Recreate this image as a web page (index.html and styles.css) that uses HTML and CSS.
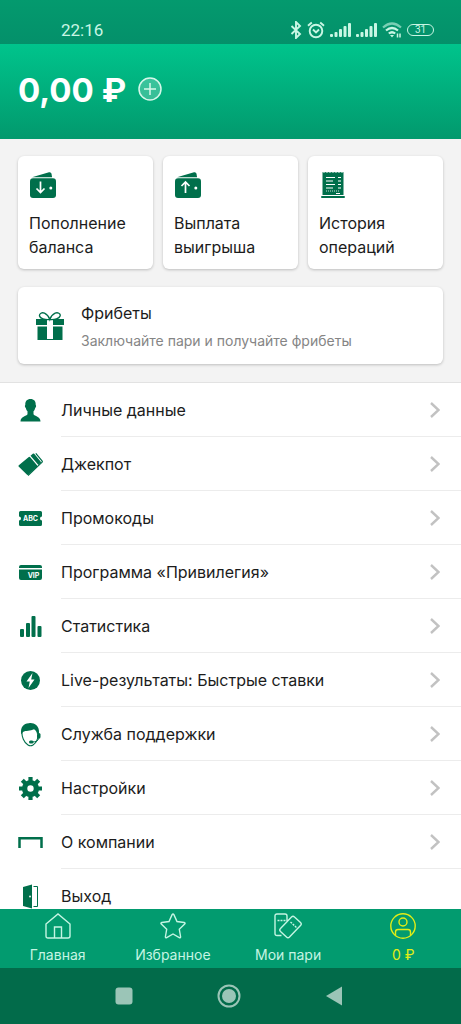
FILE: index.html
```html
<!DOCTYPE html>
<html lang="ru">
<head>
<meta charset="utf-8">
<meta name="viewport" content="width=device-width, initial-scale=1">
<title>Личный кабинет</title>
<link rel="stylesheet" href="styles.css">
</head>
<body>
<div class="app">
  <div class="status">
    <span class="status-time">22:16</span>
    <div class="status-icons">
      <svg width="12" height="18" viewBox="0 0 12 18" fill="none" stroke="currentColor" stroke-width="1.9"><path d="M1.500 5l8.500 8-4 4V1l4 4-8.500 8"/></svg>
      <svg width="18" height="18" viewBox="0 0 18 18" fill="none" stroke="currentColor" stroke-width="1.900"><circle cx="9" cy="10" r="6.300"/><path d="M1 4.800L4.800 1.500M17 4.800L13.200 1.500M6 8.500l3 3 3-3"/></svg>
      <svg width="21" height="14" viewBox="0 0 21 14" fill="currentColor"><rect y="11" width="3" height="3" rx="1"/><rect x="4.500" y="9" width="3" height="5" rx="1"/><rect x="9" y="6" width="3" height="8" rx="1"/><rect x="13.500" y="3" width="3" height="11" rx="1"/><rect x="18" width="3" height="14" rx="1"/></svg>
      <svg width="21" height="14" viewBox="0 0 21 14" fill="currentColor"><rect y="11" width="3" height="3" rx="1"/><rect x="4.500" y="9" width="3" height="5" rx="1"/><rect x="9" y="6" width="3" height="8" rx="1"/><rect x="13.500" y="3" width="3" height="11" rx="1"/><rect x="18" width="3" height="14" rx="1"/></svg>
      <svg width="20" height="16" viewBox="0 0 20 16" fill="none" stroke="currentColor" stroke-width="2.200"><path d="M1 5.500Q10-2.500 19 5.500" opacity=".6"/><path d="M4 8.500q6-5 12 0M6.800 11.500q3.200-2.500 6.400 0"/><path d="M8 13h4l-2 2.500z" fill="currentColor" stroke="none"/><path d="M15.500 15.500v-4M18 11.500v4" stroke-width="1.500"/></svg>
      <span class="battery">31</span>
    </div>
  </div>

  <header class="balance">
    <h1 class="balance-sum">0,00 ₽</h1>
    <button class="balance-add" type="button" aria-label="Пополнить">
      <svg width="24" height="24" viewBox="0 0 24 24" fill="none" stroke="currentColor" stroke-width="1.500"><circle cx="12" cy="12" r="11" fill="#fff" fill-opacity=".22"/><path d="M12 6v12M6 12h12"/></svg>
    </button>
  </header>

  <main class="content">
    <section class="promo">
      <div class="cards">
        <button class="card" type="button">
          <svg width="26" height="26" viewBox="0 0 26 26" fill="currentColor"><path d="M2 5.200L19 .3q2-.5 2.500 1.500l.6 3.400z"/><rect y="6.200" width="26" height="19.800" rx="3"/><path d="M10.500 9.500v11M6.500 16.500l4 4 4-4" fill="none" stroke="#fff" stroke-width="1.700"/><circle cx="20.800" cy="16" r="1.500" fill="#fff"/></svg>
          <span class="card-title">Пополнение баланса</span>
        </button>
        <button class="card" type="button">
          <svg width="26" height="26" viewBox="0 0 26 26" fill="currentColor"><path d="M2 5.200L19 .3q2-.5 2.500 1.500l.6 3.400z"/><rect y="6.200" width="26" height="19.800" rx="3"/><path d="M10.500 21V10M6.500 14l4-4 4 4" fill="none" stroke="#fff" stroke-width="1.700"/><circle cx="20.800" cy="16" r="1.500" fill="#fff"/></svg>
          <span class="card-title">Выплата выигрыша</span>
        </button>
        <button class="card" type="button">
          <svg width="26" height="26" viewBox="0 0 26 26" fill="currentColor"><path d="M2.500 0l1.500.8L5.500 0 7 .8 8.500 0 10 .8 11.500 0l1.500.8L14.500 0l1.500.8L17.500 0 19 .8 20.500 0 22 .8 23.500 0v23h-21z"/><rect x="1" y="24" width="24" height="2" rx="1"/><path d="M6 5.500h9M6 9h7M6 12.500h9M6 16h7M18 5.500h3M18 9h3M18 12.500h3M18 16h3M16 21.500h4" stroke="#fff" stroke-width="1.200"/><path d="M6 19h14" stroke="#fff" stroke-width=".8" stroke-dasharray="1 1"/></svg>
          <span class="card-title">История операций</span>
        </button>
      </div>
      <button class="freebet" type="button">
        <svg width="28" height="28" viewBox="0 0 28 28" fill="currentColor"><path d="M13.800 7.500C9 8 4 6.500 3.500 4c-.4-2.500 2.500-4 5-2.800 2.800 1.300 4.500 3.800 5.300 6.300.8-2.500 2.500-5 5.300-6.300 2.500-1.200 5.800.3 5 2.800-.7 2.500-5.500 4-10.300 3.500z" fill="none" stroke="currentColor" stroke-width="1.300"/><path d="M0 7h11v6H0zM17 7h11v6H17zM1.500 14.500H11V28H1.500zM17 14.500h9.500V28H17z"/><path d="M10 7.500h8M10 27.500h8" stroke="currentColor"/></svg>
        <span class="freebet-text">
          <span class="freebet-title">Фрибеты</span>
          <span class="freebet-note">Заключайте пари и получайте фрибеты</span>
        </span>
      </button>
    </section>

    <ul class="menu">
      <li><a class="row" href="#">
        <svg class="row-icon" viewBox="0 0 25 25" fill="currentColor"><path d="M12.500 1C9 1 7 3.300 7.300 7c-.7.200-.5 2.500.5 3 .3 1.500 1 2.500 1.700 3.300v2.900c-1 2.300-7 1.800-7 7.300h20c0-5.500-6-5-7-7.300v-2.900c.7-.8 1.400-1.800 1.700-3.300 1-.5 1.200-2.800.5-3C18 3.300 16 1 12.500 1z"/></svg>
        <span class="row-body">Личные данные<svg class="chevron" viewBox="0 0 10 16"><path d="M1 1l7.500 7L1 15"/></svg></span></a></li>
      <li><a class="row" href="#">
        <svg class="row-icon" viewBox="0 0 25 25" fill="currentColor"><path d="M.8 13.200L10.800 5q.8-.6 1.400.2l7 8.300q.6.800-.2 1.400l-8.800 7.800q-.8.600-1.400-.1L.6 14.600q-.5-.8.200-1.400z"/><path d="M12.500 3.700l2.300-2q.8-.6 1.400.1l6.600 7.900q.6.800-.1 1.400l-2.300 2z"/><path d="M17.800 1.300l6.200 7.500q.7.900-.1 1.600L10 23.500" fill="none" stroke="currentColor" stroke-width="1.200"/></svg>
        <span class="row-body">Джекпот<svg class="chevron" viewBox="0 0 10 16"><path d="M1 1l7.500 7L1 15"/></svg></span></a></li>
      <li><a class="row" href="#">
        <svg class="row-icon" viewBox="0 0 25 25" fill="currentColor"><path d="M2.500 5h20q1.500 0 1.500 1.500v4a2 2 0 0 0 0 4v4q0 1.500-1.500 1.500h-20Q1 20 1 18.500v-4a2 2 0 0 0 0-4v-4Q1 5 2.500 5z"/><text class="icon-text" x="12.500" y="15" text-anchor="middle">ABC</text></svg>
        <span class="row-body">Промокоды<svg class="chevron" viewBox="0 0 10 16"><path d="M1 1l7.500 7L1 15"/></svg></span></a></li>
      <li><a class="row" href="#">
        <svg class="row-icon" viewBox="0 0 25 25" fill="currentColor"><path d="M3 5h19q2 0 2 2v1H1V7q0-2 2-2zM1 9.500h23V18q0 2-2 2H3q-2 0-2-2z"/><text class="icon-text" x="15.500" y="17.500" text-anchor="middle">VIP</text></svg>
        <span class="row-body">Программа «Привилегия»<svg class="chevron" viewBox="0 0 10 16"><path d="M1 1l7.500 7L1 15"/></svg></span></a></li>
      <li><a class="row" href="#">
        <svg class="row-icon" viewBox="0 0 25 25" fill="currentColor"><rect x="2" y="15" width="4" height="8" rx="1"/><rect x="8" y="9" width="4" height="14" rx="1"/><rect x="13.500" y="2" width="4" height="21" rx="1"/><rect x="19.500" y="12" width="4" height="11" rx="1"/></svg>
        <span class="row-body">Статистика<svg class="chevron" viewBox="0 0 10 16"><path d="M1 1l7.500 7L1 15"/></svg></span></a></li>
      <li><a class="row" href="#">
        <svg class="row-icon" viewBox="0 0 25 25" fill="currentColor"><circle cx="12.500" cy="12.500" r="9.500"/><path d="M14.500 5l-6 8.500h3.300L10.500 20l6-8.500h-3.300z" fill="#fff"/></svg>
        <span class="row-body">Live-результаты: Быстрые ставки<svg class="chevron" viewBox="0 0 10 16"><path d="M1 1l7.500 7L1 15"/></svg></span></a></li>
      <li><a class="row" href="#">
        <svg class="row-icon" viewBox="0 0 25 25" fill="currentColor"><path d="M3.300 12.500C1.800 5 6 1 11 1.200c3-1 11 1 10 10.300l-2 .5c-.3-2.500-1.500-4-3-4.700-3.500 2-8.500 1-11 2.700z"/><path d="M4 9.500c-.5 5 2 11 6 13.500q2.500 1.500 5 0c3-2 5-6 5-10" fill="none" stroke="currentColor" stroke-width="1.100"/><path d="M21 13v3q-1 4-7 4" fill="none" stroke="currentColor"/><rect x="19" y="11" width="3.500" height="5.500" rx="1.500"/><rect x="11" y="18.500" width="4.500" height="3" rx="1.500"/></svg>
        <span class="row-body">Служба поддержки<svg class="chevron" viewBox="0 0 10 16"><path d="M1 1l7.500 7L1 15"/></svg></span></a></li>
      <li><a class="row" href="#">
        <svg class="row-icon" viewBox="0 0 25 25" fill="none" stroke="currentColor"><circle cx="12.500" cy="12.500" r="5.900" stroke-width="5.400"/><path d="M12.500 1v5M12.500 19v5M1 12.500h5M19 12.500h5M4.300 4.300l3 3M17.700 17.700l3 3M20.700 4.300l-3 3M7.300 17.700l-3 3" stroke-width="4.200"/></svg>
        <span class="row-body">Настройки<svg class="chevron" viewBox="0 0 10 16"><path d="M1 1l7.500 7L1 15"/></svg></span></a></li>
      <li><a class="row" href="#">
        <svg class="row-icon" viewBox="0 0 25 25" fill="none" stroke="currentColor" stroke-width="2.500"><path d="M1.500 18V8.300h22V18"/></svg>
        <span class="row-body">О компании<svg class="chevron" viewBox="0 0 10 16"><path d="M1 1l7.500 7L1 15"/></svg></span></a></li>
      <li><a class="row" href="#">
        <svg class="row-icon" viewBox="0 0 25 25" fill="currentColor"><path d="M5 3l9-2.500v24L5 22z"/><path d="M15.500 2.500h4v20h-4" fill="none" stroke="currentColor"/><circle cx="12" cy="12.500" r=".9" fill="#fff"/></svg>
        <span class="row-body">Выход</span></a></li>
    </ul>
  </main>

  <nav class="tabs">
    <a class="tab" href="#"><svg width="26" height="26" viewBox="0 0 26 26"><path d="M1 11L13 1l12 10v12q0 2-2 2H3q-2 0-2-2zM9.500 25V14h7v11"/></svg>Главная</a>
    <a class="tab" href="#"><svg width="26" height="26" viewBox="0 0 26 26"><path d="M12.100 1.700q.9-1.500 1.800 0L17 8.500l7.200 1q1.500.5.500 1.600l-5.400 5.200 1.300 7.400q0 1.500-1.300.9L13 21l-6.300 3.600q-1.300.6-1.300-.9l1.300-7.400-5.400-5.200q-1-1.100.5-1.600l7.200-1z"/></svg>Избранное</a>
    <a class="tab" href="#"><svg width="28" height="26" viewBox="0 0 28 26"><path d="M7.500 22.500H3q-2 0-2-2V3q0-2 2-2h8q2 0 2 2v5M17.500 4q1.500-1.500 3 0l6 5.500q1.500 1.500 0 3L15.500 24q-1.500 1.500-3 0l-6-5.500q-1.500-1.500 0-3z"/><path d="M3.500 7.500h8M16.500 9l6 5.500" stroke-dasharray="2 1"/></svg>Мои пари</a>
    <a class="tab tab-active" href="#"><svg width="26" height="26" viewBox="0 0 26 26"><circle cx="13" cy="13" r="12.200"/><circle cx="13" cy="9" r="4"/><path d="M5.500 22.500V19q0-2.500 2.500-2.500h10q2.500 0 2.500 2.500v3.500"/></svg>0 ₽</a>
  </nav>

  <div class="system">
    <button type="button" aria-label="Недавние"><svg width="24" height="24" viewBox="0 0 24 24"><rect x="3.500" y="3.500" width="17" height="17" rx="3" fill="currentColor"/></svg></button>
    <button type="button" aria-label="Домой"><svg width="24" height="24" viewBox="0 0 24 24"><circle cx="12" cy="12" r="10.500" fill="none" stroke="currentColor" stroke-width="2"/><circle cx="12" cy="12" r="7" fill="currentColor"/></svg></button>
    <button type="button" aria-label="Назад"><svg width="24" height="24" viewBox="0 0 24 24"><path d="M4 12L20 2.500v19z" fill="currentColor"/></svg></button>
  </div>
</div>
</body>
</html>
```
FILE: styles.css
```css
* { box-sizing: border-box; }

body {
  margin: 0;
  font-family: Inter, "Noto Sans", sans-serif;
  color: #1c1c1c;
  background: #fff;
}

button {
  margin: 0;
  padding: 0;
  border: 0;
  background: none;
  font: inherit;
  color: inherit;
  text-align: left;
  cursor: pointer;
}

a { color: inherit; text-decoration: none; }
svg { display: block; flex: none; }

.app {
  display: flex;
  flex-direction: column;
  height: 100vh;
}

.status {
  flex: none;
  display: flex;
  align-items: flex-end;
  justify-content: space-between;
  height: 44px;
  padding: 0 27px 4px 61px;
  color: #c9f6e4;
  background: linear-gradient(#049a6e, #04906a);
}

.status-time {
  font: 400 17px/20px Roboto, sans-serif;
}

.status-icons {
  display: flex;
  align-items: center;
  gap: 5px;
  height: 20px;
}

.battery {
  width: 27px;
  height: 12px;
  border: 1px solid currentColor;
  border-radius: 6px;
  font: 400 10px/10px Roboto, sans-serif;
  text-align: center;
}

.balance {
  flex: none;
  display: flex;
  align-items: center;
  gap: 12px;
  height: 95px;
  padding: 0 18px 4px;
  color: #fff;
  background: linear-gradient(#00c48c, #02996d);
}

.balance-sum {
  margin: 0;
  font-size: 33px;
  line-height: 44px;
  font-weight: 700;
}

.balance-add { padding-bottom: 2px; color: #d5f7ea; }

.content {
  flex: 1;
  min-height: 0;
  overflow-y: auto;
  scrollbar-width: none;
}

.promo {
  display: flex;
  flex-direction: column;
  gap: 18px;
  padding: 17px 18px 18px;
  border-bottom: 1px solid #e2e2e2;
  background: #f3f3f3;
}

.cards {
  display: grid;
  grid-template-columns: repeat(3, 1fr);
  gap: 10px;
}

.card,
.freebet {
  display: flex;
  border-radius: 6px;
  background: #fff;
  box-shadow: 0 1px 3px rgba(0, 0, 0, .22);
}

.card {
  flex-direction: column;
  gap: 13px;
  padding: 16px 11px 10px;
}

.card svg,
.freebet svg,
.row-icon { color: #006f4b; }

.card svg { margin-left: 1px; }

.card-title { font-size: 16px; line-height: 24px; }

.freebet {
  align-items: center;
  gap: 17px;
  padding: 13px 18px;
}

.freebet-text { display: flex; flex-direction: column; gap: 5px; }
.freebet-title { font-size: 16px; line-height: 26px; }
.freebet-note { font-size: 14px; line-height: 20px; color: #858585; }

.menu {
  margin: 0;
  padding: 0;
  list-style: none;
}

.row {
  display: flex;
  align-items: center;
  gap: 18px;
  padding-left: 18px;
}

.row-icon { width: 25px; height: 25px; }

.row-body {
  flex: 1;
  display: flex;
  align-items: center;
  justify-content: space-between;
  height: 54px;
  padding-right: 21px;
  border-bottom: 1px solid #ececec;
  font-size: 16px;
  line-height: 24px;
}

.chevron {
  width: 10px;
  height: 16px;
  fill: none;
  stroke: #c2c2c2;
  stroke-width: 2.4;
}

.icon-text { font: 700 7px Inter, sans-serif; fill: #fff; }

.tabs {
  flex: none;
  display: grid;
  grid-template-columns: repeat(4, 1fr);
  height: 59px;
  color: #c5f5e3;
  background: #029b6f;
}

.tab {
  display: flex;
  flex-direction: column;
  align-items: center;
  gap: 8px;
  padding-top: 4px;
  font-size: 14px;
  line-height: 16px;
}

.tab svg { fill: none; stroke: currentColor; stroke-width: 1.4; }
.tab-active { color: #e2ed16; }

.system {
  flex: none;
  display: flex;
  justify-content: center;
  gap: 81px;
  height: 56px;
  padding-right: 4px;
  color: #9bc5b7;
  background: #026b4a;
}
```
